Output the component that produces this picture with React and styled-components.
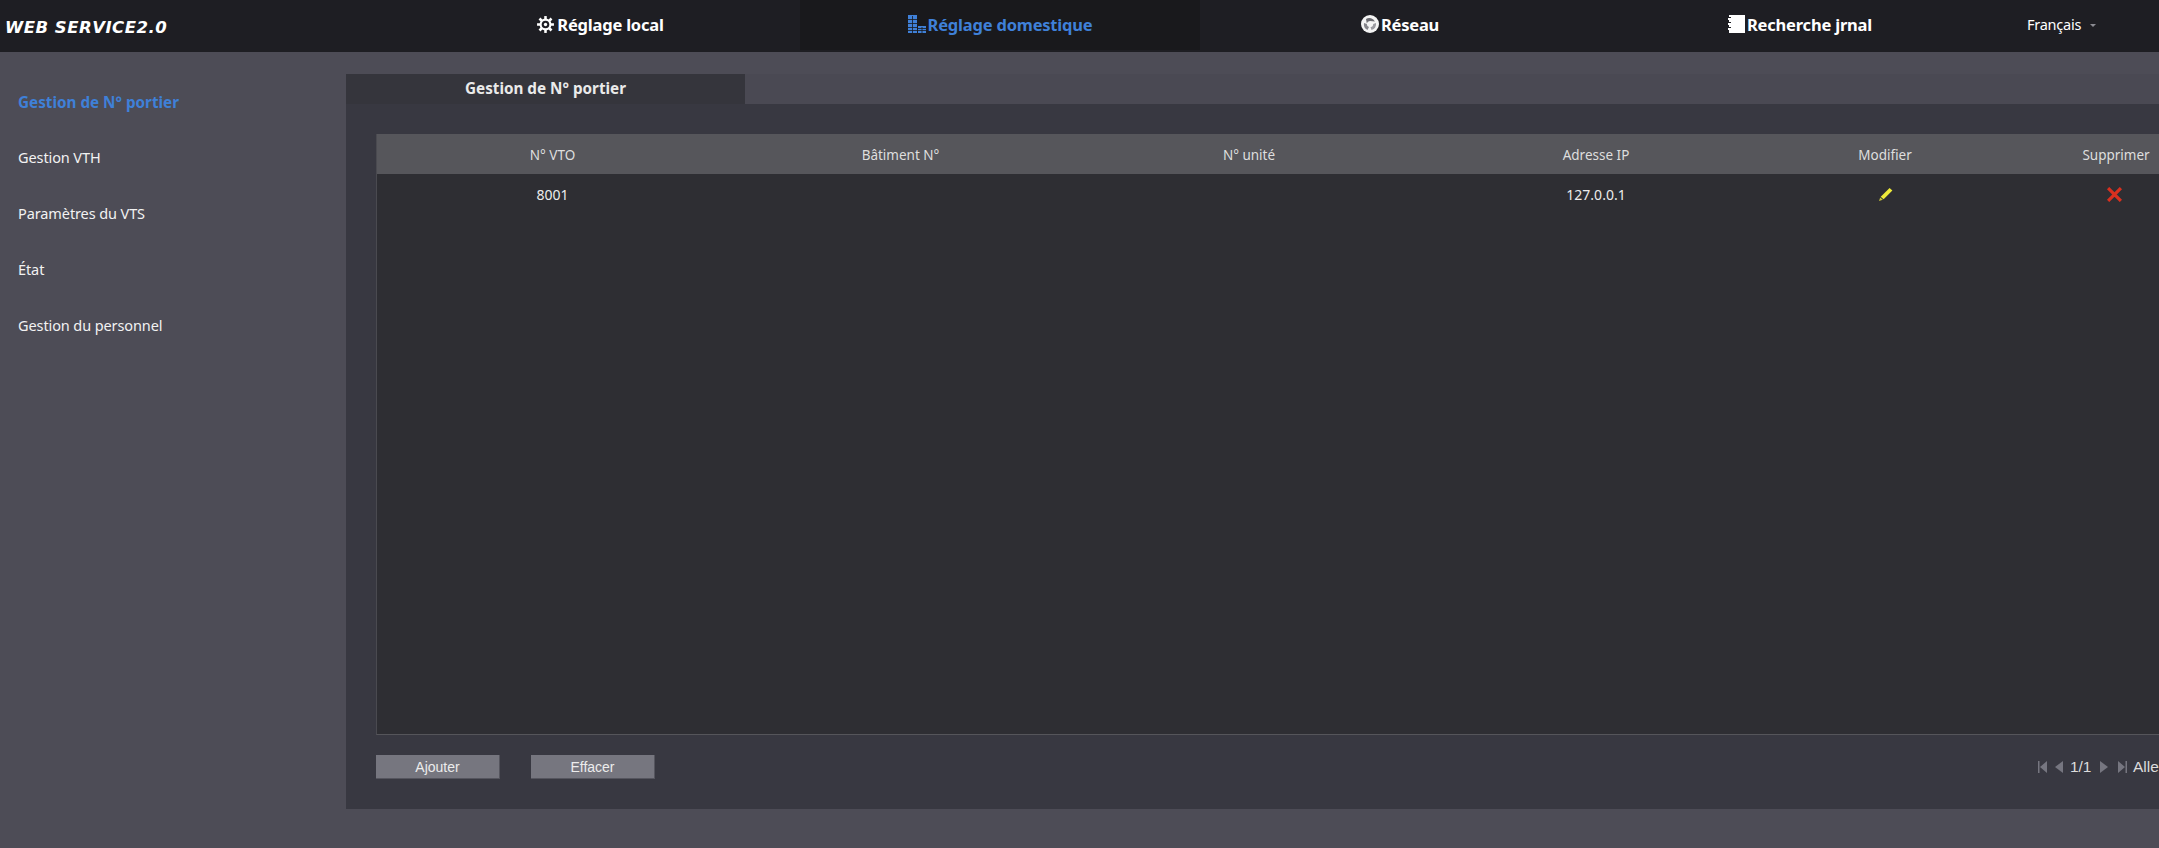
import { createGlobalStyle, styled } from "styled-components";

const GlobalStyle = createGlobalStyle`
  html, body {
    margin: 0;
    padding: 0;
    background: #4d4c56;
    overflow: hidden;
  }
  * {
    box-sizing: border-box;
  }
`;

const Page = styled.div`
  width: 2159px;
  height: 848px;
  overflow: hidden;
  font-family: "Noto Sans", sans-serif;
  color: #e6e6e6;
`;

const Header = styled.header`
  height: 52px;
  display: flex;
  align-items: flex-start;
  background: #1e1e23;
`;

const Logo = styled.div`
  width: 400px;
  height: 50px;
  padding-left: 5px;
  line-height: 55px;
  font-family: "DejaVu Sans", sans-serif;
  font-size: 16.5px;
  font-weight: 700;
  font-style: italic;
  letter-spacing: 0.5px;
  color: #fff;
  white-space: nowrap;
`;

const NavTab = styled.div`
  width: 400px;
  height: 50px;
  padding-bottom: 2px;
  display: flex;
  align-items: center;
  justify-content: center;
  gap: 2px;
  font-size: 16.5px;
  font-weight: 700;
  letter-spacing: -0.2px;
  color: ${(p) => (p.$active ? "#3f80d8" : "#fff")};
  background: ${(p) => (p.$active ? "#19191c" : "transparent")};
`;

const Lang = styled.div`
  margin-left: 27px;
  height: 50px;
  padding-bottom: 2px;
  display: flex;
  align-items: center;
  gap: 9px;
  font-size: 14.5px;
  letter-spacing: -0.25px;
  color: #fff;
`;

const Caret = styled.span`
  margin-top: 3px;
  border-left: 3px solid transparent;
  border-right: 3px solid transparent;
  border-top: 3px solid #8b8b92;
`;

const Body = styled.div`
  display: flex;
  align-items: flex-start;
`;

const Sidebar = styled.nav`
  width: 346px;
  flex: none;
  padding: 21px 0 0 18px;
`;

const SideItem = styled.div`
  height: 56px;
  line-height: ${(p) => (p.$active ? "58px" : "56px")};
  font-size: ${(p) => (p.$active ? "15.25px" : "14.5px")};
  letter-spacing: ${(p) => (p.$active ? "0" : "-0.1px")};
  font-weight: ${(p) => (p.$active ? 700 : 400)};
  color: ${(p) => (p.$active ? "#3f80d8" : "#f2f2f2")};
`;

const Main = styled.main`
  flex: none;
  width: 1813px;
  margin-top: 22px;
`;

const TabStrip = styled.div`
  height: 30px;
  background: #4a4953;
`;

const PanelTab = styled.div`
  width: 399px;
  height: 30px;
  line-height: 28px;
  text-align: center;
  font-size: 15.25px;
  font-weight: 700;
  color: #eaeaea;
  background: #35353c;
`;

const Panel = styled.section`
  height: 705px;
  padding: 30px 0 0 30px;
  background: #383841;
`;

const Table = styled.div`
  width: 1852px;
  height: 601px;
  border-left: 1px solid #4a4a50;
  border-bottom: 1px solid #55555a;
  background: #2e2e33;
`;

const Row = styled.div`
  height: 40px;
  padding-top: ${(p) => (p.$head ? "2px" : "0")};
  display: grid;
  grid-template-columns: 351px 345px 352px 342px 236px 226px;
  align-items: center;
  text-align: center;
  font-size: ${(p) => (p.$head ? "13.5px" : "14px")};
  background: ${(p) => (p.$head ? "#56565b" : "transparent")};
  color: ${(p) => (p.$head ? "#dedede" : "#ececec")};
`;

const Cell = styled.div`
  display: flex;
  justify-content: center;
  align-items: center;
  white-space: nowrap;
`;

const Footer = styled.div`
  width: 1852px;
  margin-top: 20px;
  display: flex;
  align-items: center;
`;

const Button = styled.button`
  width: 124px;
  height: 24px;
  margin-right: 31px;
  padding: 0;
  border: 0;
  border-bottom: 1px solid #55555e;
  border-right: 1px solid #55555e;
  background: #76767f;
  color: #ececec;
  font-family: "Liberation Sans", sans-serif;
  font-size: 14px;
`;

const Pager = styled.div`
  margin-left: auto;
  display: flex;
  align-items: center;
  font-family: "Liberation Sans", sans-serif;
  font-size: 15.5px;
  color: #dcdcdc;
  white-space: nowrap;
`;

const PagerIcon = styled.svg`
  width: 10px;
  height: 12px;
  margin-left: ${(p) => p.$before || 0}px;
  margin-right: ${(p) => p.$after || 0}px;
  fill: #767680;
`;

const PagerGo = styled.span`
  width: 95px;
`;

const CrossSvg = styled.svg`
  width: 15px;
  height: 15px;
  margin-right: 3px;
`;

const GearIcon = () => (
  <svg width="19" height="19" viewBox="0 0 18 18">
    <g stroke="#fff" strokeWidth="2.4">
      <line x1="9" y1="1" x2="9" y2="17" />
      <line x1="1" y1="9" x2="17" y2="9" />
      <line x1="3.3" y1="3.3" x2="14.7" y2="14.7" />
      <line x1="14.7" y1="3.3" x2="3.3" y2="14.7" />
    </g>
    <circle cx="9" cy="9" r="5.6" fill="#fff" />
    <circle cx="9" cy="9" r="3.6" fill="#1e1e23" />
    <circle cx="9" cy="9" r="1.6" fill="#fff" />
  </svg>
);

const BuildingIcon = () => (
  <svg width="18" height="18" viewBox="0 0 18 18" fill="#3f80d8">
    <path d="M0 0h9v18H0zM10 11h8v7h-8z" />
    <g stroke="#19191c" strokeWidth="0.8">
      <line x1="0" y1="4.500" x2="9" y2="4.500" />
      <line x1="0" y1="8.500" x2="9" y2="8.500" />
      <line x1="0" y1="12.500" x2="9" y2="12.500" />
      <line x1="0" y1="15.500" x2="18" y2="15.500" />
      <line x1="10" y1="13.500" x2="18" y2="13.500" />
      <line x1="4.500" y1="1" x2="4.500" y2="18" />
      <line x1="14" y1="12" x2="14" y2="18" />
    </g>
  </svg>
);

const GlobeIcon = () => (
  <svg width="18" height="18" viewBox="0 0 18 18">
    <circle cx="9" cy="9" r="9" fill="#f4f4f4" />
    <path d="M5 4a6.500 6.500 0 0 1 9 2.500L9 6a3.200 3.200 0 0 0-3.200 2.500z" fill="#6a6a70" />
    <path d="M3 8a6.500 6.500 0 0 0 3.500 7l1.500-3A3.200 3.200 0 0 1 5.800 9z" fill="#85858b" />
    <path d="M9.500 12.200a3.200 3.200 0 0 0 2.700-3.200l2.800-1a6.500 6.500 0 0 1-4.500 7z" fill="#9a9aa0" />
  </svg>
);

const NotebookIcon = () => (
  <svg width="17" height="18" viewBox="0 0 17 18">
    <rect x="1" y="0" width="16" height="18" fill="#fff" />
    <g fill="#1e1e23">
      <rect x="0" y="0" width="1" height="18" />
      <rect x="1" y="2" width="2" height="1" />
      <rect x="1" y="7" width="2" height="1" />
      <rect x="1" y="12" width="2" height="1" />
    </g>
    <g fill="#fff">
      <rect x="0" y="3" width="1" height="2" />
      <rect x="0" y="8" width="1" height="2" />
      <rect x="0" y="13" width="1" height="2" />
    </g>
  </svg>
);

const PencilIcon = () => (
  <svg width="15" height="15" viewBox="0 0 15 15">
    <path d="M11.600 1 14.400 3.400 5.600 12.200 2.700 9.800z" fill="#eeea3a" />
    <path d="M2.200 10.600 4.800 12.800 1 14z" fill="#c7c43a" />
  </svg>
);

const CrossIcon = () => (
  <CrossSvg viewBox="0 0 14 14">
    <path d="M1 1 13 13M13 1 1 13" stroke="#d9301f" strokeWidth="3" />
  </CrossSvg>
);

const navTabs = [
  { label: "Réglage local", Icon: GearIcon },
  { label: "Réglage domestique", Icon: BuildingIcon, active: true },
  { label: "Réseau", Icon: GlobeIcon },
  { label: "Recherche jrnal", Icon: NotebookIcon },
];

const sideItems = [
  "Gestion de N° portier",
  "Gestion VTH",
  "Paramètres du VTS",
  "État",
  "Gestion du personnel",
];

const columns = ["N° VTO", "Bâtiment N°", "N° unité", "Adresse IP", "Modifier", "Supprimer"];

export default function App() {
  return (
    <Page>
      <GlobalStyle />
      <Header>
        <Logo>WEB SERVICE2.0</Logo>
        {navTabs.map(({ label, Icon, active }) => (
          <NavTab key={label} $active={active}>
            <Icon />
            {label}
          </NavTab>
        ))}
        <Lang>
          Français
          <Caret />
        </Lang>
      </Header>
      <Body>
        <Sidebar>
          {sideItems.map((item, i) => (
            <SideItem key={item} $active={i === 0}>
              {item}
            </SideItem>
          ))}
        </Sidebar>
        <Main>
          <TabStrip>
            <PanelTab>Gestion de N° portier</PanelTab>
          </TabStrip>
          <Panel>
            <Table>
              <Row $head>
                {columns.map((c) => (
                  <Cell key={c}>{c}</Cell>
                ))}
              </Row>
              <Row>
                <Cell>8001</Cell>
                <Cell />
                <Cell />
                <Cell>127.0.0.1</Cell>
                <Cell>
                  <PencilIcon />
                </Cell>
                <Cell>
                  <CrossIcon />
                </Cell>
              </Row>
            </Table>
            <Footer>
              <Button>Ajouter</Button>
              <Button>Effacer</Button>
              <Pager>
                <PagerIcon viewBox="0 0 10 12" $after={6}>
                  <path d="M0 0h1.500v12H0zM9 0v12L2 6z" />
                </PagerIcon>
                <PagerIcon viewBox="0 0 10 12" $after={5.5}>
                  <path d="M9 0v12L1 6z" />
                </PagerIcon>
                <span>1/1</span>
                <PagerIcon viewBox="0 0 10 12" $before={7.5} $after={7.5}>
                  <path d="M1 0v12l8-6z" />
                </PagerIcon>
                <PagerIcon viewBox="0 0 10 12" $after={6.5}>
                  <path d="M10 0H8.500v12H10zM1 0v12l7-6z" />
                </PagerIcon>
                <PagerGo>Aller</PagerGo>
              </Pager>
            </Footer>
          </Panel>
        </Main>
      </Body>
    </Page>
  );
}
